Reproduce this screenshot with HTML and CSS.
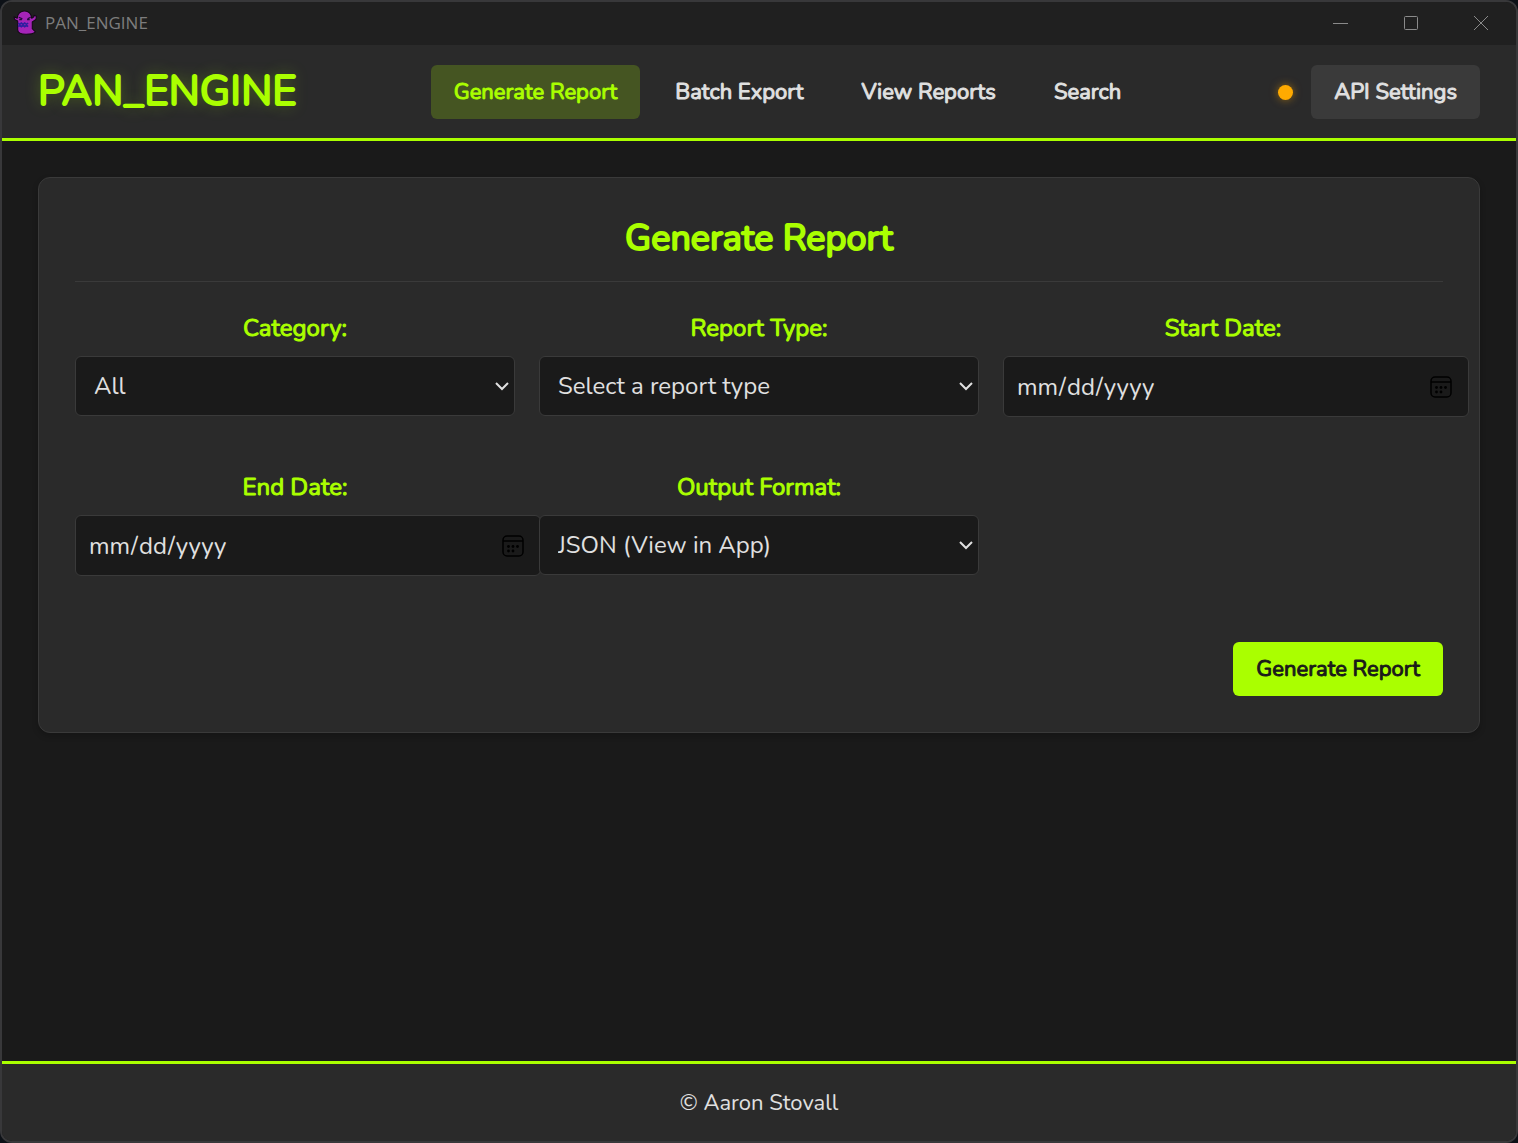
FILE: index.html
```html
<!DOCTYPE html>
<html lang="en">
<head>
<meta charset="utf-8">
<meta name="viewport" content="width=device-width, initial-scale=1">
<title>PAN_ENGINE</title>
<link rel="stylesheet" href="styles.css">
</head>
<body>
<div class="window">
  <div class="titlebar">
    <svg class="app-icon" viewBox="0 0 24 24" aria-hidden="true">
      <path d="M4 8C4 3.500 7.500 1 11 1c4 0 6.500 2.500 7 7l2-1.500V5l2.500 1-.5 3-3.500 2.500V18l3 3c-1.500 1.500-4.500 2.300-9 2.300-5 0-8-1.300-8-4.300v-8.500L1.500 9 1 6.500z" fill="#a524b8" stroke="#120816" stroke-width="1" stroke-linejoin="round"/>
      <path d="M5.500 7l3.500 1.500M14 8.500L17 7M6 9.300h2.500M13.500 9.300H16" stroke="#240c3d" stroke-width="1.200" fill="none"/>
      <path d="M5 12.500l1.500 1.300L8 12.500l1.700 1.300 1.500-1.300 1.800 1.300 1.500-1.300M5 16l1.500-1.300L8 16l1.700-1.300 1.500 1.300 1.800-1.300 1.500 1.300" fill="none" stroke="#2d1fa0" stroke-width="1.500"/>
    </svg>
    <span class="app-name">PAN_ENGINE</span>
    <div class="window-controls">
      <button type="button" aria-label="Minimize"><svg viewBox="0 0 16 16"><path d="M0 8.500h15"/></svg></button>
      <button type="button" aria-label="Maximize"><svg viewBox="0 0 16 16"><rect x="1.500" y="1.500" width="13" height="13" rx="1"/></svg></button>
      <button type="button" aria-label="Close"><svg viewBox="0 0 16 16"><path d="M1 1l14 14M15 1L1 15"/></svg></button>
    </div>
  </div>
  <header class="header">
    <h1 class="brand">PAN_ENGINE</h1>
    <nav class="nav">
      <button type="button" class="btn active">Generate Report</button>
      <button type="button" class="btn">Batch Export</button>
      <button type="button" class="btn">View Reports</button>
      <button type="button" class="btn">Search</button>
    </nav>
    <div class="api">
      <span class="status-dot"></span>
      <button type="button" class="btn btn-secondary">API Settings</button>
    </div>
  </header>
  <main class="main">
    <section class="card">
      <h2 class="card-title">Generate Report</h2>
      <form>
        <div class="fields">
          <div class="field">
            <label for="category">Category:</label>
            <select id="category"><option>All</option></select>
          </div>
          <div class="field">
            <label for="report-type">Report Type:</label>
            <select id="report-type"><option>Select a report type</option></select>
          </div>
          <div class="field">
            <label for="start-date">Start Date:</label>
            <input type="date" id="start-date">
          </div>
          <div class="field">
            <label for="end-date">End Date:</label>
            <input type="date" id="end-date">
          </div>
          <div class="field">
            <label for="format">Output Format:</label>
            <select id="format"><option>JSON (View in App)</option></select>
          </div>
        </div>
        <div class="actions">
          <button type="button" class="btn btn-primary">Generate Report</button>
        </div>
      </form>
    </section>
  </main>
  <footer class="footer">© Aaron Stovall</footer>
</div>
</body>
</html>
```
FILE: styles.css
```css
:root {
  --lime: #aaff00;
  --bg: #1a1a1a;
  --panel: #2a2a2a;
  --line: #3a3a3a;
  --text: #e0e0e0;
  --font: Nunito, Lato, sans-serif;
}

* { box-sizing: border-box; }

body {
  margin: 0;
  background: #0d1117;
  color: var(--text);
  font: 24px/36px var(--font);
}

.window {
  display: flex;
  flex-direction: column;
  min-height: 100vh;
  border: 2px solid #38383a;
  border-radius: 12px;
  background: var(--bg);
  overflow: hidden;
}

.titlebar {
  display: flex;
  align-items: center;
  height: 43px;
  padding: 0 0 2px 11px;
  background: #202020;
}

.app-icon { width: 25px; height: 25px; }

.app-name {
  margin-left: 7px;
  color: #7d7d7d;
  font: 17px/24px "Segoe UI", "Open Sans", sans-serif;
}

.window-controls { display: flex; margin-left: auto; }

.window-controls button {
  display: grid;
  place-items: center;
  width: 70px;
  height: 40px;
  padding: 0;
  border: 0;
  background: none;
}

.window-controls svg {
  width: 16px;
  height: 16px;
  fill: none;
  stroke: #8a8a8a;
  stroke-width: 1;
}

.header {
  display: flex;
  align-items: center;
  justify-content: space-between;
  padding: 20px 36px 19px;
  border-bottom: 3px solid var(--lime);
  background: var(--panel);
}

/* Emphasised text is the regular weight, thickened by a stroke. */
.brand,
.btn,
.card-title,
.field label {
  font-weight: 400;
  -webkit-text-stroke: 1px currentColor;
}

.brand {
  margin: 0;
  color: var(--lime);
  font-size: 42px;
  line-height: 54px;
  -webkit-text-stroke-width: 2px;
  text-shadow: 0 0 15px rgba(170, 255, 0, 0.4);
}

.nav { display: flex; gap: 12px; }

.btn {
  padding: 12px 23px;
  border: 0;
  border-radius: 6px;
  background: transparent;
  color: var(--text);
  font-family: var(--font);
  font-size: 22px;
  line-height: 30px;
}

.btn.active { background: #455522; color: var(--lime); }
.btn-secondary { background: var(--line); }
.btn-primary { background: var(--lime); color: var(--bg); }

.api { display: flex; align-items: center; gap: 18px; }

.status-dot {
  width: 15px;
  height: 15px;
  border-radius: 50%;
  background: #ffaa00;
  box-shadow: 0 0 8px rgba(255, 170, 0, 0.5);
}

.main { flex: 1; padding: 36px; }

.card {
  padding: 36px;
  border: 1px solid var(--line);
  border-radius: 12px;
  background: var(--panel);
  box-shadow: 0 3px 6px rgba(0, 0, 0, 0.2);
}

.card-title {
  margin: 0 0 24px;
  padding-bottom: 18px;
  border-bottom: 1px solid var(--line);
  color: var(--lime);
  font-size: 36px;
  line-height: 49px;
  text-align: center;
  -webkit-text-stroke-width: 2px;
}

.fields {
  display: grid;
  grid-template-columns: repeat(3, minmax(0, 1fr));
  gap: 24px;
}

.field {
  display: flex;
  flex-direction: column;
  min-height: 135px;
}

.field label {
  margin: 4px 0 10px;
  color: var(--lime);
  text-align: center;
}

.field select,
.field input {
  border: 1px solid var(--line);
  border-radius: 6px;
  background-color: var(--bg);
  color: var(--text);
  font: 24px/34px var(--font);
}

.field select {
  height: 60px;
  padding: 12px 18px;
  appearance: none;
  background-image: url("data:image/svg+xml,%3Csvg xmlns='http://www.w3.org/2000/svg' width='14' height='10' viewBox='0 0 14 10'%3E%3Cpath d='M1 2l6 6 6-6' fill='none' stroke='%23e0e0e0' stroke-width='2'/%3E%3C/svg%3E");
  background-repeat: no-repeat;
  background-position: right 5px center;
}

/* Date boxes keep the content-box model, so their padding extends past the column. */
.field input {
  box-sizing: content-box;
  width: 100%;
  height: 35px;
  padding: 12px;
}

.field input::-webkit-calendar-picker-indicator {
  width: 24px;
  height: 24px;
  padding: 0;
  margin-right: 3px;
  background: url("data:image/svg+xml,%3Csvg xmlns='http://www.w3.org/2000/svg' width='24' height='24' viewBox='0 0 24 24'%3E%3Cg fill='none' stroke='%23000' stroke-width='1.500'%3E%3Crect x='2' y='2' width='20' height='20' rx='4'/%3E%3Cpath d='M2 7h20'/%3E%3C/g%3E%3Cg fill='%23000'%3E%3Ccircle cx='7.500' cy='12.500' r='1.400'/%3E%3Ccircle cx='12' cy='12.500' r='1.400'/%3E%3Ccircle cx='16.500' cy='12.500' r='1.400'/%3E%3Ccircle cx='7.500' cy='17' r='1.400'/%3E%3Ccircle cx='12' cy='17' r='1.400'/%3E%3C/g%3E%3C/svg%3E") center / 24px no-repeat;
}

.actions {
  display: flex;
  justify-content: flex-end;
  margin-top: 42px;
}

.footer {
  padding: 21px 20px 19px;
  border-top: 3px solid var(--lime);
  background: var(--panel);
  font-size: 22px;
  line-height: 37px;
  text-align: center;
}
```
